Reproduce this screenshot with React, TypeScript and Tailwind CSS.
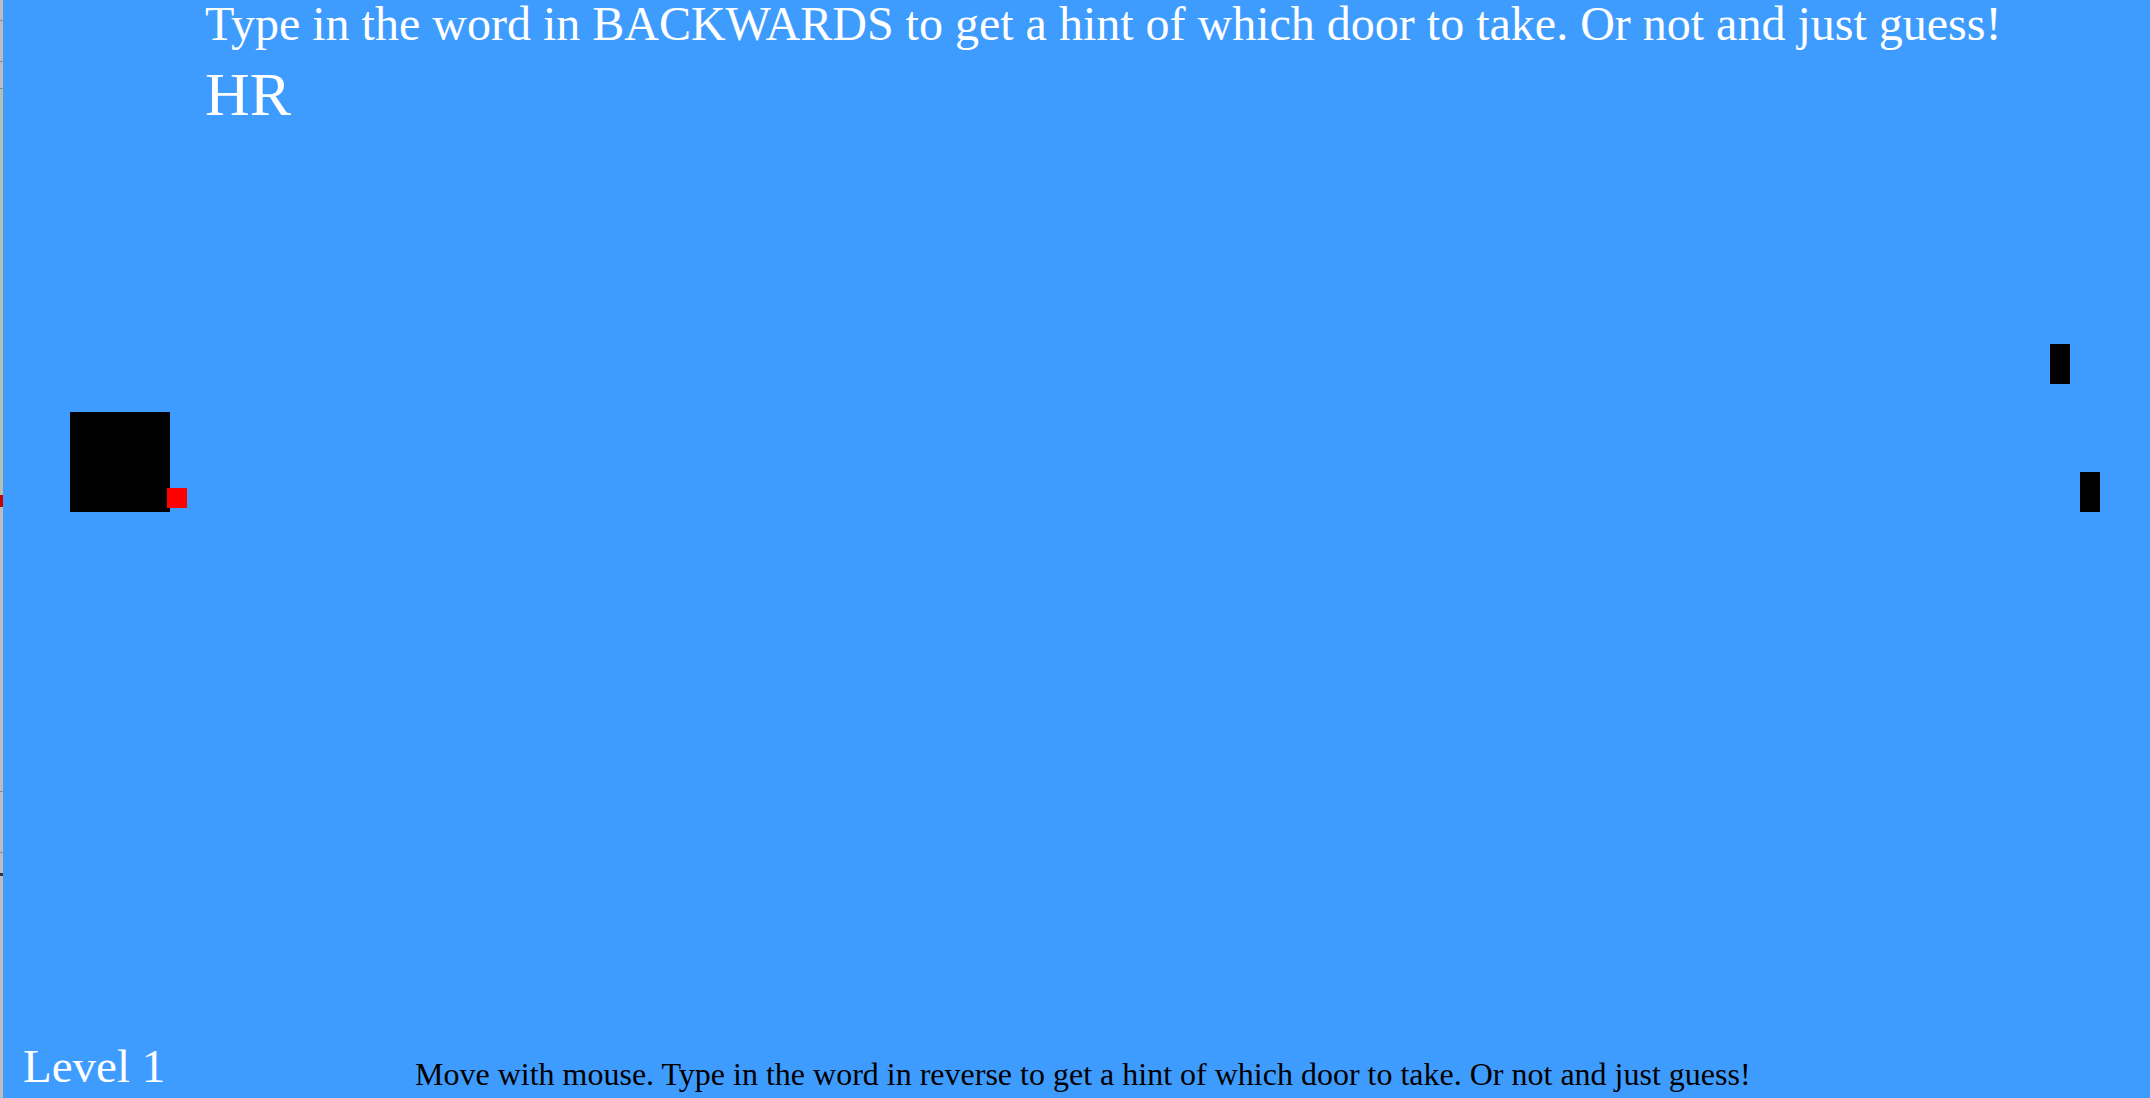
import React from "react";

export default function App() {
  const serif = { fontFamily: '"Liberation Serif", "Times New Roman", serif' } as React.CSSProperties;
  return (
    <div className="flex w-[2150px] h-[1098px] overflow-hidden" style={serif}>
      <div className="w-[3px] h-full bg-[#bcbcbc] flex flex-col shrink-0">
        <div className="h-[20px]" />
        <div className="h-[1px] bg-[#8a8a8a]" />
        <div className="h-[40px]" />
        <div className="h-[1px] bg-[#8a8a8a]" />
        <div className="h-[26px]" />
        <div className="h-[1px] bg-[#8a8a8a]" />
        <div className="h-[406px] bg-[#b5bfb0]" />
        <div className="h-[12px] bg-[#c80000]" />
        <div className="h-[284px]" />
        <div className="h-[1px] bg-[#8a8a8a]" />
        <div className="h-[60px]" />
        <div className="h-[1px] bg-[#8a8a8a]" />
        <div className="h-[20px]" />
        <div className="h-[3px] bg-[#333]" />
      </div>
      <div className="relative flex-1 h-full bg-[#3f9cff] flex flex-col">
        <div className="pl-[202px] text-white">
          <div className="text-[48px] leading-[48px] whitespace-nowrap">
            Type in the word in BACKWARDS to get a hint of which door to take. Or not and just guess!
          </div>
          <div className="mt-[16px] text-[62px] leading-[61px]">HR</div>
        </div>
        <div className="flex-1" />
        <div className="flex items-end pl-[20px] pb-[8px]">
          <div className="w-[392px] text-white text-[47px] leading-[47px] whitespace-nowrap">Level 1</div>
          <div className="text-black text-[32px] leading-[32px] whitespace-nowrap">
            Move with mouse. Type in the word in reverse to get a hint of which door to take. Or not and just guess!
          </div>
        </div>

        <div className="absolute left-[67px] top-[412px] w-[100px] h-[100px] bg-black" />
        <div className="absolute left-[164px] top-[488px] w-[20px] h-[20px] bg-[#ff0000]" />
        <div className="absolute left-[2047px] top-[344px] w-[20px] h-[40px] bg-black" />
        <div className="absolute left-[2077px] top-[472px] w-[20px] h-[40px] bg-black" />
      </div>
    </div>
  );
}
